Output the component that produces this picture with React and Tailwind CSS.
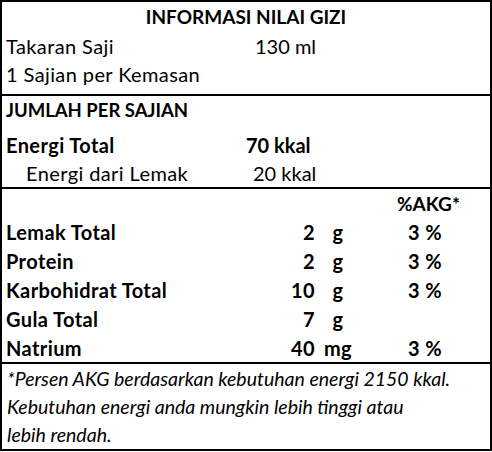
const font = { fontFamily: "Lato, 'Open Sans', sans-serif" };

const nutrients = [
  { name: "Lemak Total", amount: "2", unit: "g", pct: "3 %" },
  { name: "Protein", amount: "2", unit: "g", pct: "3 %" },
  { name: "Karbohidrat Total", amount: "10", unit: "g", pct: "3 %" },
  { name: "Gula Total", amount: "7", unit: "g", pct: "" },
  { name: "Natrium", amount: "40", unit: "mg", pct: "3 %", last: true },
];

const NutrientRow = ({ name, amount, unit, pct, last }) => (
  <div className={`flex pl-1 font-bold ${last ? "h-[28px] leading-[28px]" : "h-[29px] leading-[29px]"}`}>
    <span className="w-[269px]">{name}</span>
    <span className="w-[40px] text-right">{amount}</span>
    <span className="w-[38px] ml-1 text-center">{unit}</span>
    <span className="ml-[51px]">{pct}</span>
  </div>
);

const App = () => {
  return (
    <div className="w-[492px] h-[452px] bg-white">
      <div
        className="w-[492px] h-[451px] border-2 border-black flex flex-col text-[20px] tracking-[0.4px] text-black"
        style={font}
      >
        {/* header */}
        <div className="h-[92px] flex flex-col">
          <div className="h-[30px] leading-[30px] text-center font-bold text-[19px] tracking-normal">
            INFORMASI NILAI GIZI
          </div>
          <div className="h-[28px] leading-[28px] flex pl-1">
            <span className="w-[249px]">Takaran Saji</span>
            <span className="tracking-normal">130 ml</span>
          </div>
          <div className="h-[28px] leading-[28px] pl-1">1 Sajian per Kemasan</div>
        </div>

        <div className="border-t-2 border-black" />

        {/* energi */}
        <div className="h-[91px] flex flex-col">
          <div className="h-[28px] leading-[28px] pl-1 font-bold text-[18.5px] tracking-normal">
            JUMLAH PER SAJIAN
          </div>
          <div className="h-[29px] leading-[29px] mt-[7px] flex pl-1 font-bold">
            <span className="w-[240px]">Energi Total</span>
            <span className="tracking-normal">70 kkal</span>
          </div>
          <div className="h-[27px] leading-[27px] flex pl-6">
            <span className="w-[227px]">Energi dari Lemak</span>
            <span className="tracking-normal">20 kkal</span>
          </div>
        </div>

        <div className="border-t-2 border-black" />

        {/* nutrients */}
        <div className="h-[173px] flex flex-col">
          <div className="h-[29px] leading-[29px] pl-[395px] font-bold text-[19px] tracking-normal">%AKG*</div>
          {nutrients.map((n) => (
            <NutrientRow key={n.name} {...n} />
          ))}
        </div>

        <div className="border-t-2 border-black" />

        {/* footnote */}
        <div className="h-[85px] pt-px pl-[5px] italic text-[19.5px] tracking-normal flex flex-col">
          <p className="h-[28px] leading-[28px]">*Persen AKG berdasarkan kebutuhan energi 2150 kkal.</p>
          <p className="h-[28px] leading-[28px]">Kebutuhan energi anda mungkin lebih tinggi atau</p>
          <p className="h-[28px] leading-[28px]">lebih rendah.</p>
        </div>
      </div>
    </div>
  );
};

export default App;
